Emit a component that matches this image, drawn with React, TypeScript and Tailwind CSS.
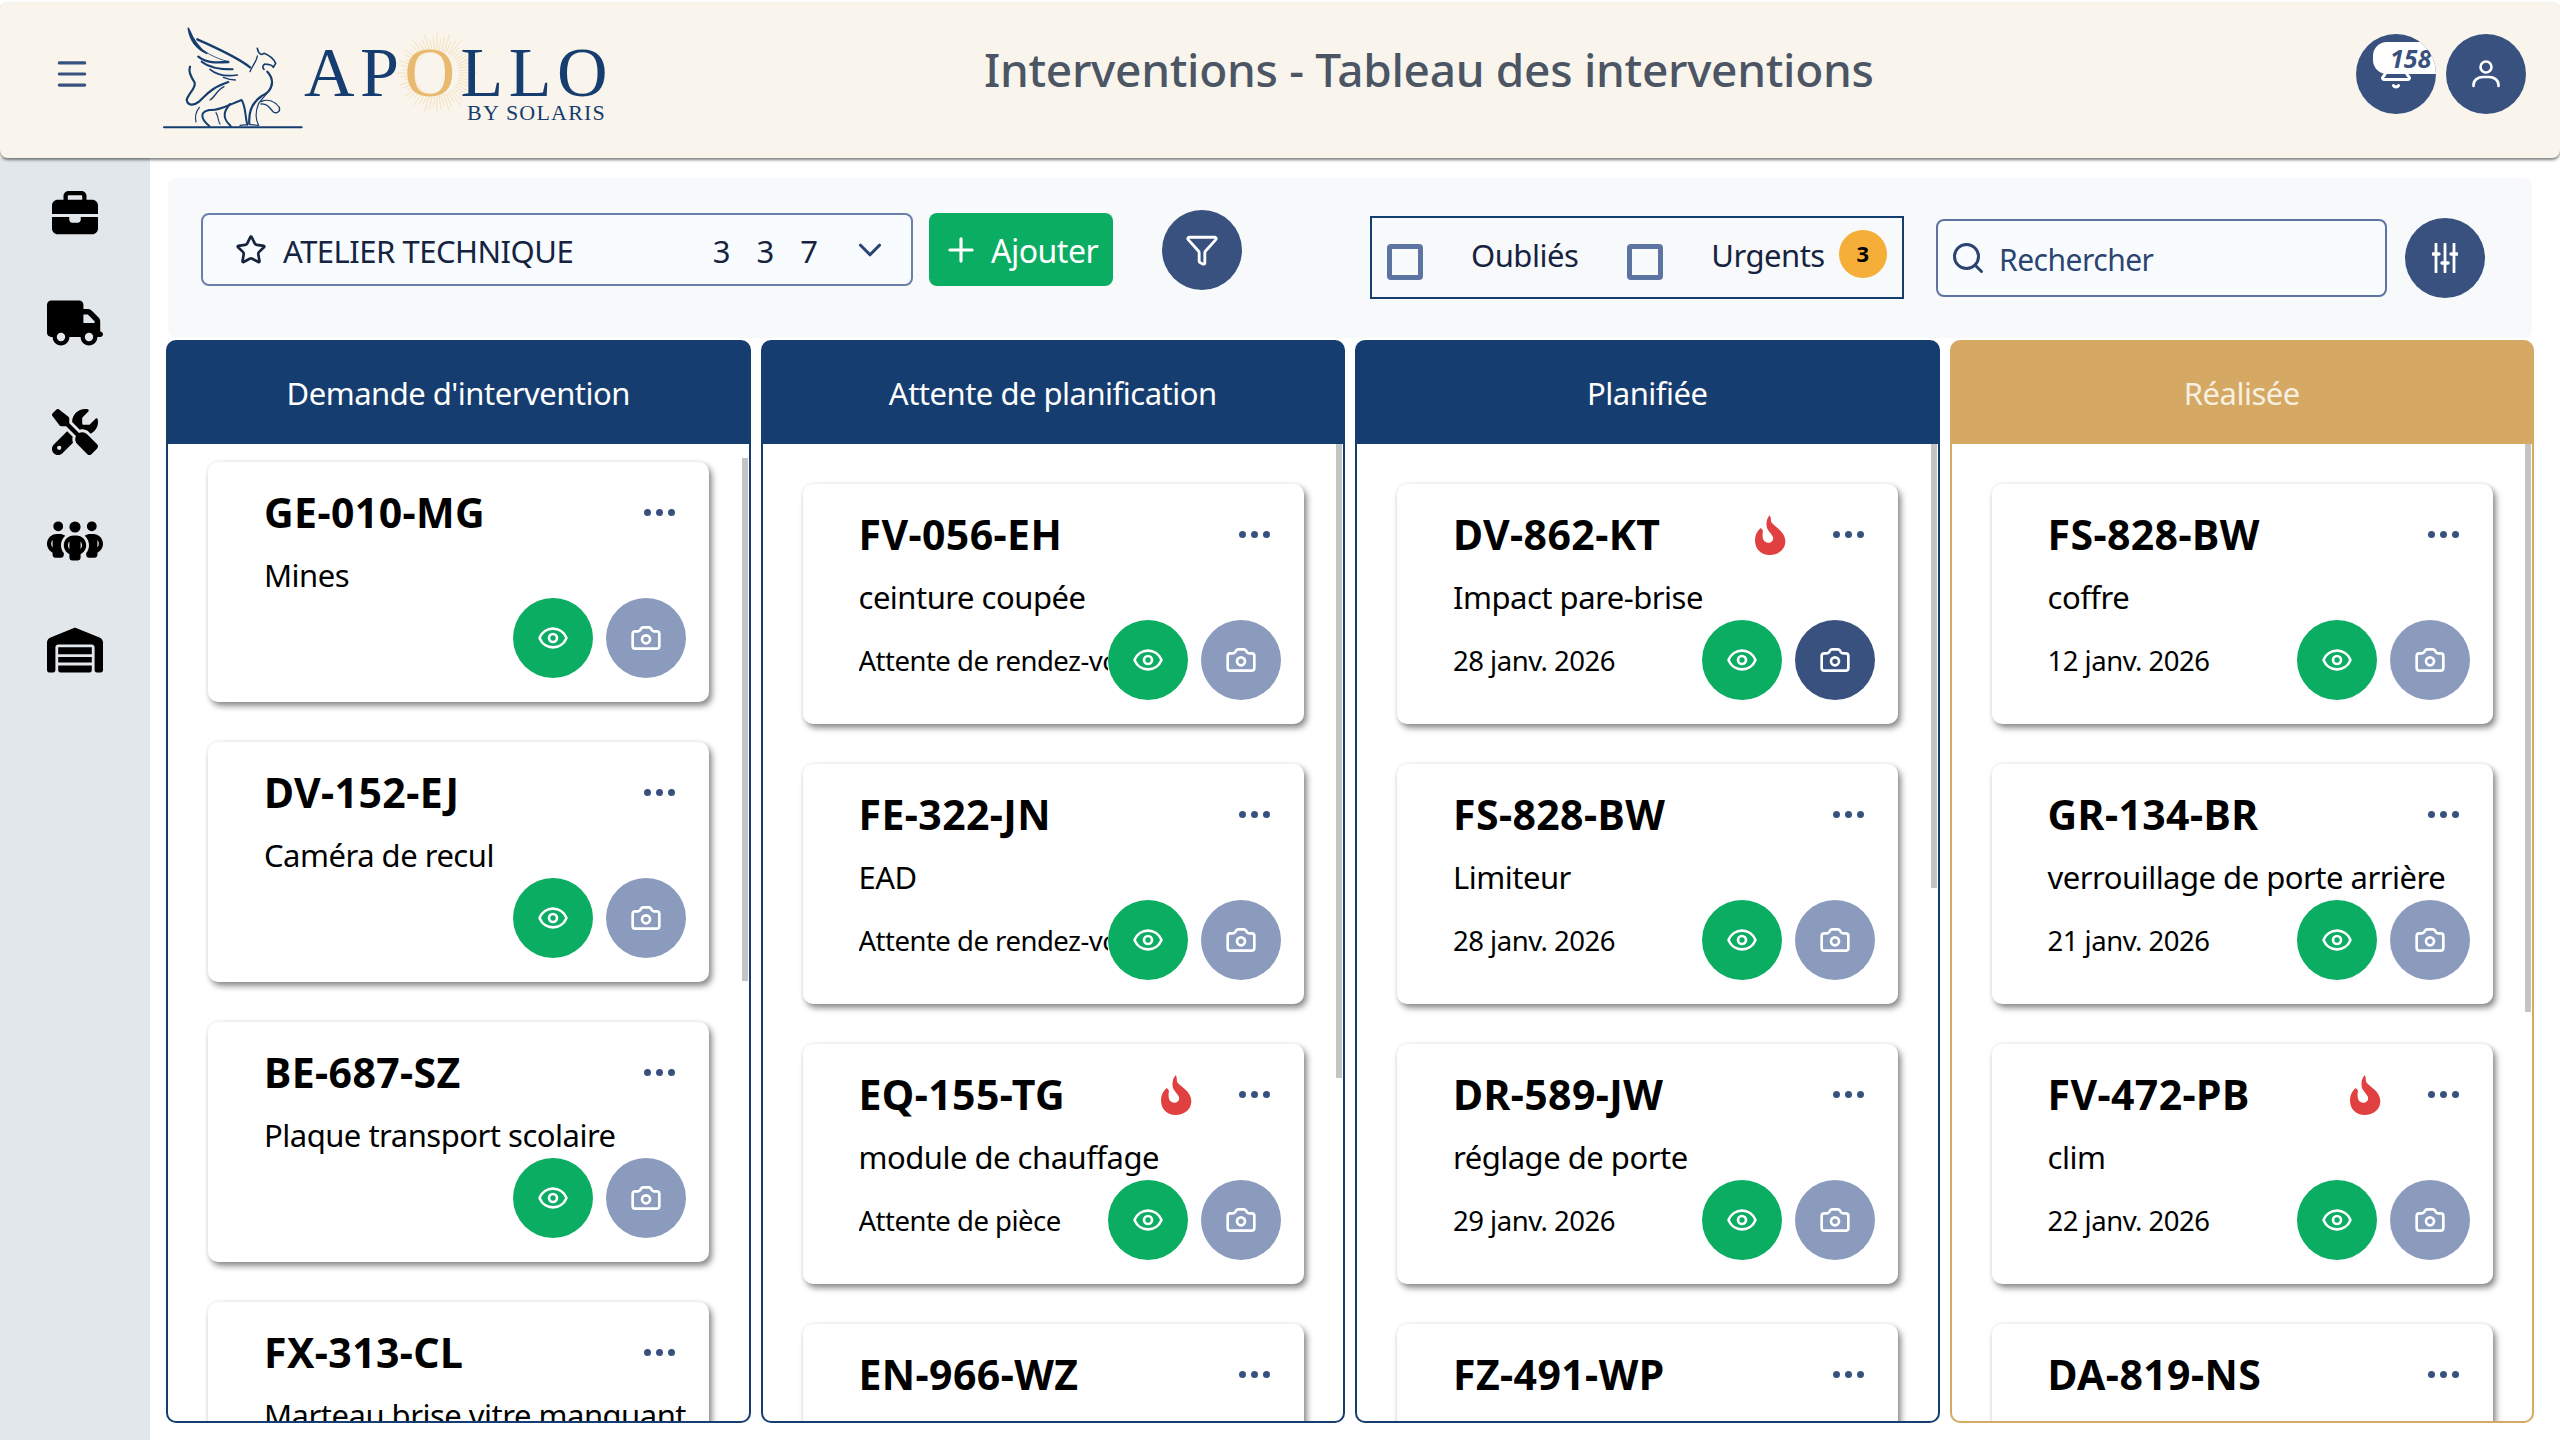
import React from 'react';
import { Bell, Camera, ChevronDown, Eye, Funnel, Menu, Plus, Search, Star } from 'lucide-react';
import { FaBriefcase, FaPeopleGroup, FaScrewdriverWrench, FaTruck, FaWarehouse } from 'react-icons/fa6';

interface CardData {
  plate: string;
  title: string;
  info?: string;
  fire?: boolean;
  activeCamera?: boolean;
}

interface ColumnData {
  name: string;
  gold?: boolean;
  listClass: string;
  thumbClass: string;
  cards: CardData[];
}

const columns: ColumnData[] = [
  {
    name: "Demande d'intervention",
    listClass: 'pt-[18px]',
    thumbClass: 'top-[14px] h-[523px]',
    cards: [
      { plate: 'GE-010-MG', title: 'Mines' },
      { plate: 'DV-152-EJ', title: 'Caméra de recul' },
      { plate: 'BE-687-SZ', title: 'Plaque transport scolaire' },
      { plate: 'FX-313-CL', title: 'Marteau brise vitre manquant' },
    ],
  },
  {
    name: 'Attente de planification',
    listClass: 'pt-[40px]',
    thumbClass: 'top-0 h-[634px]',
    cards: [
      { plate: 'FV-056-EH', title: 'ceinture coupée', info: 'Attente de rendez-vous' },
      { plate: 'FE-322-JN', title: 'EAD', info: 'Attente de rendez-vous' },
      { plate: 'EQ-155-TG', title: 'module de chauffage', info: 'Attente de pièce', fire: true },
      { plate: 'EN-966-WZ', title: '' },
    ],
  },
  {
    name: 'Planifiée',
    listClass: 'pt-[40px]',
    thumbClass: 'top-0 h-[444px]',
    cards: [
      { plate: 'DV-862-KT', title: 'Impact pare-brise', info: '28 janv. 2026', fire: true, activeCamera: true },
      { plate: 'FS-828-BW', title: 'Limiteur', info: '28 janv. 2026' },
      { plate: 'DR-589-JW', title: 'réglage de porte', info: '29 janv. 2026' },
      { plate: 'FZ-491-WP', title: '' },
    ],
  },
  {
    name: 'Réalisée',
    gold: true,
    listClass: 'pt-[40px]',
    thumbClass: 'top-0 h-[568px]',
    cards: [
      { plate: 'FS-828-BW', title: 'coffre', info: '12 janv. 2026' },
      { plate: 'GR-134-BR', title: 'verrouillage de porte arrière', info: '21 janv. 2026' },
      { plate: 'FV-472-PB', title: 'clim', info: '22 janv. 2026', fire: true },
      { plate: 'DA-819-NS', title: '' },
    ],
  },
];

const Griffin = () => (
  <svg viewBox="0 0 450 345" className="h-[115px] w-[150px] shrink-0 text-[#163d6f]" fill="none" stroke="currentColor" strokeLinecap="round" strokeLinejoin="round">
    <path d="M85 25 C90 60 108 85 140 100 C115 85 100 60 85 25 Z" fill="currentColor" strokeWidth="5" />
    <path d="M112 58 C170 85 230 110 270 142" strokeWidth="7" />
    <path d="M115 110 C140 130 170 128 205 126" strokeWidth="7" />
    <path d="M125 125 C150 145 185 148 218 148" strokeWidth="6" />
    <path d="M150 148 C170 165 200 170 232 165" strokeWidth="5" />
    <path d="M190 172 C205 178 215 180 226 180" strokeWidth="4" />
    <path d="M100 70 C130 95 165 115 205 125" strokeWidth="2.5" />
    <path d="M270 155 C278 135 290 125 292 108" strokeWidth="4" />
    <path d="M292 85 C296 105 306 105 312 100 C325 105 340 115 347 130 L340 142 C336 132 325 134 315 132 C308 136 306 142 312 148" strokeWidth="5" />
    <path d="M322 155 C345 180 340 212 305 228 C280 245 265 275 268 312" strokeWidth="6.5" />
    <path d="M335 185 C335 210 315 225 296 250 C288 270 285 295 295 314" strokeWidth="3.5" />
    <path d="M303 245 C325 235 345 245 358 262 C362 275 350 282 340 276 C330 265 322 250 303 252" strokeWidth="4" />
    <path d="M90 140 C84 155 92 170 104 188 C108 205 85 220 80 240 C84 258 100 258 118 244 C140 225 150 205 205 186" strokeWidth="6.5" />
    <path d="M118 262 C108 275 104 290 108 306" strokeWidth="3.5" />
    <path d="M150 240 C165 232 170 210 192 200" strokeWidth="4" />
    <path d="M148 270 C120 275 120 295 148 318" strokeWidth="6" />
    <path d="M148 270 C180 272 205 255 245 240 C258 262 255 290 262 314" strokeWidth="6" />
    <path d="M168 278 C176 290 174 305 180 312" strokeWidth="3.5" />
    <path d="M210 252 C195 270 182 290 212 318" strokeWidth="6" />
    <path d="M240 316 L262 314 M270 314 L296 316" strokeWidth="3.5" />
    <path d="M12 322 H425" strokeWidth="6" />
  </svg>
);

const SunRays = () => {
  const rays = Array.from({ length: 60 }, (_, i) => {
    const angle = (i / 60) * Math.PI * 2;
    const outer = i % 3 === 0 ? 40 : i % 3 === 1 ? 34 : 37;
    return {
      x1: 40 + Math.cos(angle) * 22,
      y1: 40 + Math.sin(angle) * 22,
      x2: 40 + Math.cos(angle) * outer,
      y2: 40 + Math.sin(angle) * outer,
    };
  });
  return (
    <svg viewBox="0 0 80 80" className="absolute left-[93px] top-[-10px] h-[80px] w-[80px]" stroke="#f3ddb3" strokeWidth="0.8">
      {rays.map((r, i) => (
        <line key={i} x1={r.x1} y1={r.y1} x2={r.x2} y2={r.y2} />
      ))}
    </svg>
  );
};

const Logo = () => (
  <div className="ml-[69px] mt-[7px] flex items-start">
    <Griffin />
    <div className="relative ml-[-6px] mt-[23px] w-[308px] font-['Liberation_Serif',serif] text-[#163d6f]">
      <SunRays />
      <div className="relative h-[60px] whitespace-nowrap text-[70px] leading-[60px] tracking-[5.5px]">
        AP<span className="text-[#e8b96f]">O</span>LLO
      </div>
      <div className="pr-[6px] text-right text-[22px] leading-[20px] tracking-[1.2px]">BY SOLARIS</div>
    </div>
  </div>
);

const RoundButton = ({ className, children }: { className: string; children: React.ReactNode }) => (
  <div className={`flex size-[80px] shrink-0 items-center justify-center rounded-full text-white ${className}`}>{children}</div>
);

const Header = () => (
  <header className="mt-[2px] flex h-[156px] shrink-0 items-center rounded-lg bg-[#f9f4ec] pb-[12px] pr-[34px] shadow-[0_2px_3px_rgba(0,0,0,0.5)] relative z-10">
    <Menu size={38} strokeWidth={2} className="ml-[53px] shrink-0 text-[#38517f]" />
    <Logo />
    <h1 className="mb-[10px] ml-[372px] whitespace-nowrap text-[46px] font-medium leading-none tracking-[-0.3px] text-[#4b5563]">
      Interventions - Tableau des interventions
    </h1>
    <div className="ml-auto flex gap-[10px]">
      <div className="relative size-[80px] overflow-hidden rounded-full bg-[#38517f]">
        <Bell size={36} strokeWidth={2} className="absolute left-[22px] top-[20px] text-white" />
        <div className="absolute left-[17px] top-[8px] h-[32px] w-[70px] rounded-l-[14px] rounded-tr-[14px] bg-white pl-[17px] text-[25px] font-bold italic leading-[32px] text-[#38517f]">
          158
        </div>
      </div>
      <RoundButton className="bg-[#38517f]">
        <svg width="28" height="28" viewBox="0 0 28 28" fill="none" stroke="white" strokeWidth="2.6" strokeLinecap="round">
          <circle cx="14" cy="7" r="5.5" />
          <path d="M1.5 26 V25 C1.5 20 6 17 11 17 H17 C22 17 26.5 20 26.5 25 V26" />
        </svg>
      </RoundButton>
    </div>
  </header>
);

const Sidebar = () => (
  <aside className="flex w-[150px] shrink-0 flex-col items-center bg-[#e2e7eb] pt-[1px] text-black">
    <div className="flex h-[109px] items-center"><FaBriefcase size={46} /></div>
    <div className="flex h-[109px] items-center"><FaTruck size={56} /></div>
    <div className="flex h-[109px] items-center"><FaScrewdriverWrench size={46} /></div>
    <div className="flex h-[109px] items-center"><FaPeopleGroup size={56} /></div>
    <div className="flex h-[109px] items-center"><FaWarehouse size={56} /></div>
  </aside>
);

const SlidersIcon = () => (
  <svg width="26" height="30" viewBox="0 0 26 30" fill="none" stroke="white" strokeWidth="2.8" strokeLinecap="round">
    <path d="M4 1 V29 M13 1 V29 M22 1 V29" />
    <path d="M1 11 H7 M19 11 H25 M10 20 H16" strokeWidth="3.4" />
  </svg>
);

const Toolbar = () => (
  <div className="mx-[2px] flex h-[160px] shrink-0 items-start rounded-lg bg-[#f8f9fb] pl-[33px] pt-[32px]">
    <div className="mt-[3px] flex h-[73px] w-[712px] items-center rounded-lg border-2 border-[#6a7fa9] bg-[#f8fcff] pl-[32px] pr-[22px] text-[#16233f]">
      <Star size={32} strokeWidth={2} className="shrink-0" />
      <span className="ml-[16px] whitespace-nowrap pt-[3px] text-[31px] tracking-[-0.5px]">ATELIER TECHNIQUE</span>
      <span className="ml-auto flex gap-[26px] pt-[3px] text-[31px]">
        <span>3</span>
        <span>3</span>
        <span>7</span>
      </span>
      <ChevronDown size={38} strokeWidth={2} className="ml-[33px] shrink-0 text-[#2c4470]" />
    </div>
    <div className="ml-[16px] mt-[3px] flex h-[73px] w-[184px] items-center rounded-lg bg-[#0aad62] pl-[13px] text-white">
      <Plus size={38} strokeWidth={2} className="shrink-0" />
      <span className="ml-[11px] pt-[3px] text-[32px] tracking-[-0.5px]">Ajouter</span>
    </div>
    <RoundButton className="ml-[49px] bg-[#38517f]">
      <Funnel size={34} strokeWidth={2} />
    </RoundButton>
    <div className="ml-[128px] mt-[6px] flex h-[83px] w-[534px] items-center border-2 border-[#163d6f] pl-[15px] text-[#16233f]">
      <div className="mt-[8px] size-[36px] shrink-0 rounded-[4px] border-[5px] border-[#5d73a1]" />
      <span className="mb-[5px] ml-[48px] text-[31px] tracking-[-0.5px]">Oubliés</span>
      <div className="ml-[49px] mt-[8px] size-[36px] shrink-0 rounded-[4px] border-[5px] border-[#5d73a1]" />
      <span className="mb-[5px] ml-[48px] text-[31px] tracking-[-0.5px]">Urgents</span>
      <span className="mb-[8px] ml-[14px] flex size-[48px] shrink-0 items-center justify-center rounded-full bg-[#f5ae37] text-[22px] font-bold text-black">3</span>
    </div>
    <div className="ml-[32px] mt-[9px] flex h-[78px] w-[451px] items-center rounded-lg border-2 border-[#5d73a1] bg-[#f8fcff] pl-[12px] text-[#2c4470]">
      <Search size={36} strokeWidth={2} className="shrink-0" />
      <span className="ml-[13px] pt-[3px] text-[30px] tracking-[-0.5px]">Rechercher</span>
    </div>
    <RoundButton className="ml-[18px] mt-[8px] bg-[#38517f]">
      <SlidersIcon />
    </RoundButton>
  </div>
);

const Flame = () => (
  <svg viewBox="40 30 105 132" className="h-[44px] w-[35px] shrink-0" fill="#e04040">
    <path d="M90 37 C95 42 92 50 95 58 C105 72 137 85 137 115 C137 140 115 156 90 156 C65 156 46 140 46 112 C46 98 52 85 62 76 C66 76 68 80 70 84 C68 92 68 105 72 112 C78 122 95 122 100 110 C104 98 88 90 82 75 C78 60 82 45 90 37 Z" />
  </svg>
);

const Card = ({ card }: { card: CardData }) => (
  <div className="flex h-[240px] w-[501px] shrink-0 flex-col rounded-[10px] bg-white pl-[56px] pr-[23px] pt-[24px] shadow-[3px_4px_6px_rgba(0,0,0,0.45),0_0_4px_rgba(0,0,0,0.08)]">
    <div className="flex h-[54px] shrink-0 items-center">
      <span className="mb-[1px] flex-1 whitespace-nowrap text-[41px] font-bold leading-none tracking-[0.4px] text-black">{card.plate}</span>
      {card.fire && <Flame />}
      <div className="mb-[2px] ml-[45px] mr-[11px] flex gap-[5px]">
        <div className="size-[7px] rounded-full bg-[#38517f]" />
        <div className="size-[7px] rounded-full bg-[#38517f]" />
        <div className="size-[7px] rounded-full bg-[#38517f]" />
      </div>
    </div>
    <div className="mt-[15px] h-[40px] shrink-0 whitespace-nowrap text-[31px] leading-[40px] tracking-[-0.5px] text-black">{card.title}</div>
    <div className="mt-[3px] flex h-[80px] shrink-0 items-center">
      <div className="min-w-0 flex-1 overflow-hidden whitespace-nowrap pt-[2px] text-[27.5px] tracking-[-0.5px] text-black">{card.info}</div>
      <RoundButton className="bg-[#0aad62]">
        <Eye size={32} strokeWidth={2} />
      </RoundButton>
      <RoundButton className={`ml-[13px] ${card.activeCamera ? 'bg-[#38517f]' : 'bg-[#8a9bbd]'}`}>
        <Camera size={32} strokeWidth={2} />
      </RoundButton>
    </div>
  </div>
);

const Column = ({ column }: { column: ColumnData }) => (
  <div className="flex min-w-0 flex-col overflow-hidden">
    <div className={`flex h-[104px] shrink-0 items-center justify-center rounded-t-[10px] pt-[2px] text-[31px] tracking-[-0.5px] ${column.gold ? 'bg-[#d5a863] text-[#f7f0e0]' : 'bg-[#163d6f] text-white'}`}>
      {column.name}
    </div>
    <div className={`relative min-h-0 flex-1 overflow-hidden rounded-b-[10px] border-2 border-t-0 bg-white ${column.gold ? 'border-[#d5a863]' : 'border-[#163d6f]'}`}>
      <div className={`flex flex-col gap-[40px] pl-[40px] ${column.listClass}`}>
        {column.cards.map((card) => (
          <Card key={card.plate} card={card} />
        ))}
      </div>
      <div className={`absolute right-[1px] w-[6px] bg-[#c4c4c4] ${column.thumbClass}`} />
    </div>
  </div>
);

export default function App() {
  return (
    <div className="flex h-screen w-full flex-col overflow-hidden bg-white font-['Noto_Sans',sans-serif]">
      <Header />
      <div className="flex min-h-0 flex-1">
        <Sidebar />
        <main className="flex min-w-0 flex-1 flex-col pb-[17px] pl-[16px] pr-[26px] pt-[20px]">
          <Toolbar />
          <div className="mt-[2px] grid min-h-0 flex-1 grid-cols-4 gap-[10px]">
            {columns.map((column) => (
              <Column key={column.name} column={column} />
            ))}
          </div>
        </main>
      </div>
    </div>
  );
}
